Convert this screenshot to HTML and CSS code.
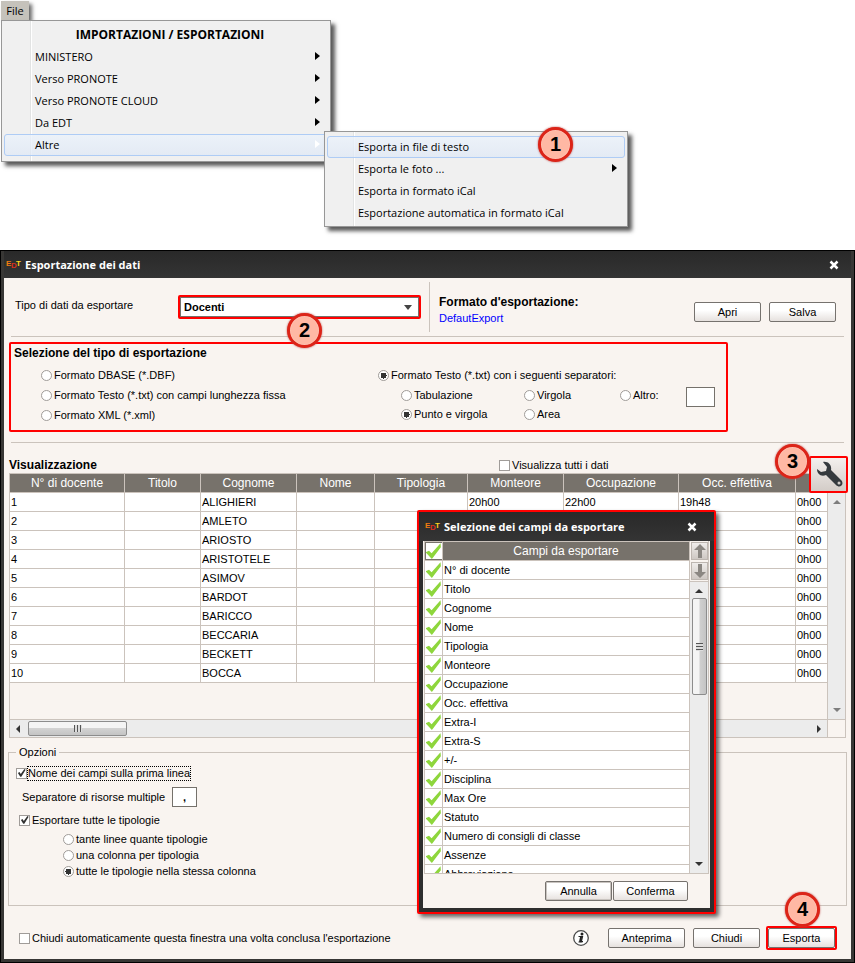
FILE: index.html
```html
<!DOCTYPE html>
<html lang="it">
<head>
  <meta charset="utf-8">
  <title>Esportazione dei dati</title>
  <link rel="stylesheet" href="styles.css">
</head>
<body>
  <nav class="menu-area">
    <button type="button" class="menu-tab">File</button>
    <div class="menu">
      <h2>IMPORTAZIONI / ESPORTAZIONI</h2>
      <button type="button" class="menu-item sub">MINISTERO</button>
      <button type="button" class="menu-item sub">Verso PRONOTE</button>
      <button type="button" class="menu-item sub">Verso PRONOTE CLOUD</button>
      <button type="button" class="menu-item sub">Da EDT</button>
      <button type="button" class="menu-item sub active">Altre</button>
    </div>
    <div class="menu submenu">
      <button type="button" class="menu-item active">Esporta in file di testo</button>
      <button type="button" class="menu-item sub">Esporta le foto ...</button>
      <button type="button" class="menu-item">Esporta in formato iCal</button>
      <button type="button" class="menu-item">Esportazione automatica in formato iCal</button>
      <span class="badge badge-1">1</span>
    </div>
  </nav>

  <main class="window">
    <header class="titlebar">
      <span class="logo"><b>E</b><b>D</b><b>T</b></span>
      <h1>Esportazione dei dati</h1>
      <button type="button" class="close" aria-label="Chiudi">
        <svg width="10" height="10" viewBox="0 0 10 10"><path d="M1.500 1.500l7 7M8.500 1.500l-7 7" stroke="#fff" stroke-width="2.500"/></svg>
      </button>
    </header>

    <div class="window-body">
      <section class="top-row">
        <label class="type-label" for="dataType">Tipo di dati da esportare</label>
        <div class="select-box">
          <select id="dataType"><option>Docenti</option></select>
          <span class="badge badge-2">2</span>
        </div>
        <div class="format">
          <strong>Formato d'esportazione:</strong>
          <a href="#">DefautExport</a>
        </div>
        <div class="top-buttons">
          <button type="button" class="btn">Apri</button>
          <button type="button" class="btn">Salva</button>
        </div>
      </section>

      <section class="export-type">
        <h2>Selezione del tipo di esportazione</h2>
        <div class="formats">
          <div class="format-list">
            <label><input type="radio" name="format">Formato DBASE (*.DBF)</label>
            <label><input type="radio" name="format">Formato Testo (*.txt) con campi lunghezza fissa</label>
            <label><input type="radio" name="format">Formato XML (*.xml)</label>
          </div>
          <div>
            <label><input type="radio" name="format" checked>Formato Testo (*.txt) con i seguenti separatori:</label>
            <div class="separators">
              <div>
                <label><input type="radio" name="sep">Tabulazione</label>
                <label><input type="radio" name="sep" checked>Punto e virgola</label>
              </div>
              <div>
                <label><input type="radio" name="sep">Virgola</label>
                <label><input type="radio" name="sep">Area</label>
              </div>
              <label><input type="radio" name="sep">Altro:</label>
              <input type="text" class="sep-input" aria-label="Altro separatore">
            </div>
          </div>
        </div>
      </section>

      <section class="preview">
        <div class="preview-head">
          <h2>Visualizzazione</h2>
          <label><input type="checkbox">Visualizza tutti i dati</label>
        </div>
        <div class="grid-box">
          <div class="grid-data">
            <table class="grid">
              <colgroup>
                <col class="c-num"><col class="c-title"><col class="c-surname"><col class="c-name"><col class="c-type">
                <col class="c-hours"><col class="c-occ"><col class="c-eff"><col class="c-extra">
              </colgroup>
              <thead>
                <tr><th>N° di docente</th><th>Titolo</th><th>Cognome</th><th>Nome</th><th>Tipologia</th><th>Monteore</th><th>Occupazione</th><th>Occ. effettiva</th><th></th></tr>
              </thead>
              <tbody>
                <tr><td>1</td><td></td><td>ALIGHIERI</td><td></td><td></td><td>20h00</td><td>22h00</td><td>19h48</td><td>0h00</td></tr>
                <tr><td>2</td><td></td><td>AMLETO</td><td></td><td></td><td></td><td></td><td></td><td>0h00</td></tr>
                <tr><td>3</td><td></td><td>ARIOSTO</td><td></td><td></td><td></td><td></td><td></td><td>0h00</td></tr>
                <tr><td>4</td><td></td><td>ARISTOTELE</td><td></td><td></td><td></td><td></td><td></td><td>0h00</td></tr>
                <tr><td>5</td><td></td><td>ASIMOV</td><td></td><td></td><td></td><td></td><td></td><td>0h00</td></tr>
                <tr><td>6</td><td></td><td>BARDOT</td><td></td><td></td><td></td><td></td><td></td><td>0h00</td></tr>
                <tr><td>7</td><td></td><td>BARICCO</td><td></td><td></td><td></td><td></td><td></td><td>0h00</td></tr>
                <tr><td>8</td><td></td><td>BECCARIA</td><td></td><td></td><td></td><td></td><td></td><td>0h00</td></tr>
                <tr><td>9</td><td></td><td>BECKETT</td><td></td><td></td><td></td><td></td><td></td><td>0h00</td></tr>
                <tr><td>10</td><td></td><td>BOCCA</td><td></td><td></td><td></td><td></td><td></td><td>0h00</td></tr>
              </tbody>
            </table>
          </div>
          <div class="vscroll main-vscroll"><i class="arrow up dim"></i><i class="arrow down dim"></i></div>
          <div class="hscroll"><i class="arrow left"></i><span class="hthumb"></span><i class="arrow right"></i></div>
          <div class="corner"></div>
        </div>
        <button type="button" class="tool-btn" aria-label="Scegli i campi">
          <svg width="30" height="30" viewBox="0 0 30 30">
            <path d="M9 2c5-1 9 3 8 8l10 10c4 4-1 9-5 5L12 15c-5 2-9-1-9-6l4 3 5-1 1-4z" fill="#353a3e"/>
            <circle cx="25" cy="23" r="1.500" fill="#cfcac6"/>
          </svg>
        </button>
        <span class="badge badge-3">3</span>
      </section>

      <fieldset class="options">
        <legend>Opzioni</legend>
        <label class="opt-first"><input type="checkbox" checked><span>Nome dei campi sulla prima linea</span></label>
        <div class="opt-sep">
          <label for="multiSep">Separatore di risorse multiple</label>
          <input type="text" id="multiSep" value=",">
        </div>
        <label class="opt-all"><input type="checkbox" checked>Esportare tutte le tipologie</label>
        <div class="opt-radios">
          <label><input type="radio" name="tip">tante linee quante tipologie</label>
          <label><input type="radio" name="tip">una colonna per tipologia</label>
          <label><input type="radio" name="tip" checked>tutte le tipologie nella stessa colonna</label>
        </div>
      </fieldset>

      <footer class="footer">
        <label><input type="checkbox">Chiudi automaticamente questa finestra una volta conclusa l'esportazione</label>
        <svg class="info" width="18" height="18" viewBox="0 0 18 18">
          <circle cx="9" cy="9" r="7.300" fill="#fff" stroke="#4a4a4a" stroke-width="1.300"/>
          <circle cx="10" cy="5" r="1.500" fill="#222"/>
          <path d="M6.500 7.500H10.500L9.300 12.500H11M6.500 13H10.500" fill="none" stroke="#222" stroke-width="1.200"/>
          <path d="M9.200 7.500L8 13" stroke="#222" stroke-width="2"/>
        </svg>
        <button type="button" class="btn wide">Anteprima</button>
        <button type="button" class="btn">Chiudi</button>
        <div class="export-box">
          <button type="submit" class="btn">Esporta</button>
          <span class="badge badge-4">4</span>
        </div>
      </footer>
    </div>

    <section class="dialog" role="dialog" aria-labelledby="dialogTitle">
      <header class="titlebar">
        <span class="logo"><b>E</b><b>D</b><b>T</b></span>
        <h1 id="dialogTitle">Selezione dei campi da esportare</h1>
        <button type="button" class="close" aria-label="Chiudi">
          <svg width="10" height="10" viewBox="0 0 10 10"><path d="M1.500 1.500l7 7M8.500 1.500l-7 7" stroke="#fff" stroke-width="2.500"/></svg>
        </button>
      </header>
      <div class="dialog-body">
        <div class="fields-box">
          <div class="fields-clip">
            <table class="fields">
              <thead>
                <tr><th class="all"><input type="checkbox" class="tick" checked aria-label="Tutti i campi"></th><th>Campi da esportare</th></tr>
              </thead>
              <tbody>
                <tr><td><input type="checkbox" class="tick" id="f1" checked></td><td><label for="f1">N° di docente</label></td></tr>
                <tr><td><input type="checkbox" class="tick" id="f2" checked></td><td><label for="f2">Titolo</label></td></tr>
                <tr><td><input type="checkbox" class="tick" id="f3" checked></td><td><label for="f3">Cognome</label></td></tr>
                <tr><td><input type="checkbox" class="tick" id="f4" checked></td><td><label for="f4">Nome</label></td></tr>
                <tr><td><input type="checkbox" class="tick" id="f5" checked></td><td><label for="f5">Tipologia</label></td></tr>
                <tr><td><input type="checkbox" class="tick" id="f6" checked></td><td><label for="f6">Monteore</label></td></tr>
                <tr><td><input type="checkbox" class="tick" id="f7" checked></td><td><label for="f7">Occupazione</label></td></tr>
                <tr><td><input type="checkbox" class="tick" id="f8" checked></td><td><label for="f8">Occ. effettiva</label></td></tr>
                <tr><td><input type="checkbox" class="tick" id="f9" checked></td><td><label for="f9">Extra-I</label></td></tr>
                <tr><td><input type="checkbox" class="tick" id="f10" checked></td><td><label for="f10">Extra-S</label></td></tr>
                <tr><td><input type="checkbox" class="tick" id="f11" checked></td><td><label for="f11">+/-</label></td></tr>
                <tr><td><input type="checkbox" class="tick" id="f12" checked></td><td><label for="f12">Disciplina</label></td></tr>
                <tr><td><input type="checkbox" class="tick" id="f13" checked></td><td><label for="f13">Max Ore</label></td></tr>
                <tr><td><input type="checkbox" class="tick" id="f14" checked></td><td><label for="f14">Statuto</label></td></tr>
                <tr><td><input type="checkbox" class="tick" id="f15" checked></td><td><label for="f15">Numero di consigli di classe</label></td></tr>
                <tr><td><input type="checkbox" class="tick" id="f16" checked></td><td><label for="f16">Assenze</label></td></tr>
                <tr><td><input type="checkbox" class="tick" id="f17" checked></td><td><label for="f17">Abbreviazione</label></td></tr>
              </tbody>
            </table>
          </div>
          <div class="fields-side">
            <button type="button" class="move" aria-label="Sposta su"><svg width="12" height="14" viewBox="0 0 12 14"><path d="M6 0l6 6H8v8H4V6H0z" fill="#8b8782"/></svg></button>
            <button type="button" class="move" aria-label="Sposta giù"><svg width="12" height="14" viewBox="0 0 12 14"><path d="M6 14L0 8h4V0h4v8h4z" fill="#8b8782"/></svg></button>
            <div class="vscroll"><i class="arrow up"></i><span class="vthumb"></span><i class="arrow down"></i></div>
          </div>
        </div>
        <div class="dialog-buttons">
          <button type="button" class="btn focus">Annulla</button>
          <button type="button" class="btn confirm">Conferma</button>
        </div>
      </div>
    </section>
  </main>
</body>
</html>
```

FILE: styles.css
```css
* {
  box-sizing: border-box;
}

body, h1, h2, fieldset, legend {
  margin: 0;
  padding: 0;
}

body {
  background: #fff;
  color: #000;
  font: 11px/16px "Liberation Sans", Arial, sans-serif;
}

button, input, select {
  margin: 0;
  padding: 0;
  font: inherit;
  color: inherit;
}

h2, strong {
  font-size: 12px;
}

/* Menu */
.menu-area {
  position: relative;
  height: 250px;
  padding: 1px;
  font-family: "Open Sans", "Noto Sans", sans-serif;
}

.menu-tab {
  display: block;
  width: 28px;
  height: 19px;
  border: 0;
  background: #c5c2bb;
  box-shadow: 3px 3px 4px rgba(0, 0, 0, 0.6);
}

.menu {
  position: relative;
  width: 330px;
  padding: 3px 2px 5px;
  border: 1px solid #979797;
  background: linear-gradient(90deg, transparent 28px, #e2e3e3 28px, #e2e3e3 29px, #fff 29px, #fff 30px, transparent 30px) #f0f0f0;
  box-shadow: 4px 4px 4px rgba(0, 0, 0, 0.65);
}

.menu h2 {
  padding-left: 8px;
  line-height: 22px;
  text-align: center;
}

.menu-item {
  position: relative;
  display: block;
  width: 100%;
  height: 22px;
  padding-left: 30px;
  border: 1px solid transparent;
  border-radius: 3px;
  background: none;
  text-align: left;
}

.menu-item.active {
  border-color: #aeccf5;
  background: linear-gradient(rgba(235, 242, 251, 0.8), rgba(222, 232, 246, 0.7));
}

.menu-item.sub::after {
  content: "";
  position: absolute;
  right: 7px;
  top: 5px;
  border: 4px solid transparent;
  border-left: 5px solid #000;
  border-right: 0;
}

.menu-item.sub.active::after {
  border-left-color: #fff;
}

.submenu {
  position: absolute;
  left: 324px;
  top: 131px;
  width: 304px;
  padding: 4px 2px 2px;
}

/* Step badges */
.badge {
  position: absolute;
  z-index: 2;
  width: 35px;
  height: 35px;
  border: 3px solid #dc2418;
  border-radius: 50%;
  background: #ffb8a4;
  box-shadow: inset 0 0 1px #fff, 0 0 2px #b44;
  font: bold 20px/28px "Liberation Sans", Arial, sans-serif;
  text-align: center;
}

.badge-1 { left: 213px; top: -5px; }
.badge-2 { left: 107px; top: 16px; }
.badge-3 { right: 41px; top: 2px; }
.badge-4 { left: 17px; top: -36px; }

/* Window */
.window {
  position: relative;
  padding: 0 3px 3px;
  border: 1px solid #000;
  background: #383735;
}

.titlebar {
  display: flex;
  align-items: center;
  height: 27px;
  padding: 0 12px 0 2px;
  background: linear-gradient(#292929, #343434);
  color: #fff;
}

.titlebar h1 {
  flex: 1;
  font: bold 11px/16px "Open Sans", "Noto Sans", sans-serif;
}

.logo {
  display: flex;
  width: 19px;
  font-size: 8px;
  line-height: 10px;
}

.logo b {
  width: 5px;
}

.logo b:nth-child(1) { color: #f07c10; }
.logo b:nth-child(2) { padding-top: 2px; color: #d8301c; }
.logo b:nth-child(3) { color: #ffd21c; }

.close {
  display: flex;
  border: 0;
  background: none;
}

.window-body {
  background: #f9f4f0;
}

label {
  display: flex;
  align-items: center;
}

/* Form controls */
input[type="radio"],
input[type="checkbox"] {
  appearance: none;
  flex: none;
  width: 11px;
  height: 11px;
  margin-right: 2px;
  border: 1px solid #a09c99;
  background: #fff;
}

input[type="radio"] {
  border-radius: 50%;
}

input[type="radio"]:checked {
  background: radial-gradient(#333 0 3px, #fff 3px);
}

input[type="checkbox"]:checked::before {
  content: "";
  display: block;
  width: 9px;
  height: 9px;
  background: #333;
  clip-path: polygon(10% 50%, 28% 40%, 42% 62%, 82% 6%, 96% 14%, 48% 92%, 36% 92%);
}

input[type="text"] {
  border: 1px solid #75716b;
  background: #fff;
}

.btn {
  width: 67px;
  height: 20px;
  border: 1px solid #76726e;
  border-radius: 2px;
  background: linear-gradient(#fff 40%, #e6e1de);
}

.btn.wide {
  width: 77px;
}

/* Top row */
.top-row {
  display: flex;
  align-items: center;
  height: 59px;
  margin: 0 7px;
  padding-right: 8px;
  border-bottom: 1px solid #cbc3bc;
}

.type-label {
  width: 167px;
  padding: 0 0 4px 4px;
}

.select-box {
  position: relative;
  width: 243px;
  border: 2px solid #f00;
  border-radius: 2px;
}

.select-box::after {
  content: "";
  position: absolute;
  right: 7px;
  top: 8px;
  border: 4px solid transparent;
  border-top: 5px solid #444;
  border-bottom: 0;
}

select {
  appearance: none;
  display: block;
  width: 100%;
  height: 20px;
  padding-left: 3px;
  border: 1px solid #75716b;
  border-radius: 0;
  background: #fff;
  font-weight: bold;
}

.format {
  flex: 1;
  display: flex;
  flex-direction: column;
  height: 50px;
  margin-left: 8px;
  padding: 12px 0 0 9px;
  border-left: 1px solid #cbc3bc;
}

.format a {
  color: #00f;
  text-decoration: none;
}

.top-buttons {
  display: flex;
  gap: 8px;
  padding-top: 10px;
}

/* Export type */
.export-type {
  margin: 5px 123px 10px 5px;
  padding: 0 3px 5px;
  border: 2px solid #f00;
  border-radius: 2px;
}

.export-type h2 {
  line-height: 18px;
}

.formats {
  display: flex;
  padding: 3px 0 0 27px;
}

.formats label {
  height: 20px;
}

.format-list {
  width: 337px;
}

.separators {
  display: flex;
  align-items: flex-start;
  padding-left: 23px;
}

.separators label + label {
  height: 18px;
}

.separators > * {
  width: 96px;
}

.separators > :first-child {
  width: 123px;
}

.separators > label {
  width: 66px;
}

.separators .sep-input {
  width: 29px;
  height: 20px;
  margin-top: 2px;
}

/* Preview */
.preview {
  position: relative;
}

.preview::before {
  content: "";
  display: block;
  height: 1px;
  margin: 0 7px;
  background: #cbc3bc;
}

.preview-head {
  display: flex;
  align-items: flex-end;
  height: 30px;
  padding-left: 5px;
}

.preview-head h2 {
  width: 490px;
}

.grid-box {
  display: grid;
  grid-template-columns: 1fr 18px;
  grid-template-rows: 246px 19px;
  margin: 0 5px;
}

.grid-data {
  border: 1px solid #cbc3bc;
  border-top: 0;
  border-bottom: 0;
}

.grid, .fields {
  width: 100%;
  border-collapse: collapse;
  table-layout: fixed;
}

.grid {
  margin-left: -1px;
  width: calc(100% + 2px);
}

.grid th, .grid td,
.fields th, .fields td {
  height: 19px;
  padding: 0 1px;
  border: 1px solid #cbc3bc;
  background: #fff;
  line-height: 16px;
  white-space: nowrap;
}

.grid th, .fields th {
  background: #77726b;
  color: #fff;
  font-size: 12px;
  font-weight: normal;
}

.c-num { width: 115px; }
.c-title { width: 76px; }
.c-surname { width: 96px; }
.c-name { width: 78px; }
.c-type { width: 93px; }
.c-hours { width: 96px; }
.c-occ { width: 115px; }
.c-eff { width: 117px; }

.vscroll {
  display: flex;
  flex-direction: column;
  align-items: center;
  justify-content: space-between;
  padding: 7px 0;
  background: #ececec;
}

.main-vscroll {
  padding-top: 27px;
  border-right: 1px solid #cbc3bc;
}

.hscroll {
  display: flex;
  align-items: center;
  padding: 0 6px;
  border: 1px solid #cbc3bc;
  background: #ececec;
}

.hthumb {
  display: flex;
  align-items: center;
  justify-content: center;
  width: 99px;
  height: 15px;
  margin: 0 auto 0 8px;
  border: 1px solid #8c8c8c;
  border-radius: 2px;
  background: linear-gradient(#f4f4f4 50%, #d2d2d2 50%, #c4c4c4);
}

.hthumb::before {
  content: "";
  width: 8px;
  height: 7px;
  background: repeating-linear-gradient(90deg, #555 0 1px, #ddd 1px 3px);
}

.arrow {
  border: 4px solid transparent;
}

.arrow.up { border-top: 0; border-bottom-color: #333; }
.arrow.down { border-bottom: 0; border-top-color: #333; }
.arrow.left { border-left: 0; border-right-color: #333; }
.arrow.right { border-right: 0; border-left-color: #333; }
.arrow.dim { opacity: 0.6; }

.corner {
  border: 1px solid #cbc3bc;
  border-left: 0;
}

.tool-btn {
  position: absolute;
  right: 3px;
  top: 14px;
  width: 39px;
  height: 37px;
  border: 2px solid #f00;
  border-radius: 2px;
  background: linear-gradient(#f3f0ee, #d3ccc7);
}

.tool-btn svg {
  display: block;
  margin: auto;
}

/* Options */
.options {
  margin: 7px 4px 0;
  padding: 6px 7px 26px;
  border: 1px solid #cbc3bc;
}

.options legend {
  padding: 0 3px;
  line-height: 14px;
}

.opt-first {
  height: 16px;
}

.opt-first input[type="checkbox"] {
  margin-right: 1px;
}

.opt-first span {
  line-height: 13px;
  outline: 1px dotted #000;
}

.opt-sep {
  display: flex;
  align-items: center;
  gap: 7px;
  margin: 6px 0 5px 6px;
}

.opt-sep input[type="text"] {
  width: 25px;
  height: 20px;
  font-weight: bold;
  text-align: center;
}

.opt-all {
  padding-left: 3px;
}

.opt-radios {
  padding: 3px 0 0 47px;
}

/* Footer */
.footer {
  display: flex;
  align-items: center;
  gap: 8px;
  height: 53px;
  padding: 11px 14px 0 15px;
}

.footer label {
  flex: 1;
}

.info {
  margin-right: 10px;
}

.export-box {
  position: relative;
  margin-left: -2px;
  border: 2px solid #f00;
  border-radius: 2px;
}

.export-box .btn {
  display: block;
}

/* Field dialog */
.dialog {
  position: absolute;
  right: 138px;
  top: 259px;
  width: 299px;
  padding: 0 4px 4px;
  border: 2px solid #f00;
  border-radius: 2px;
  background: #2e2e2e;
  box-shadow: 3px 3px 4px rgba(0, 0, 0, 0.6);
}

.dialog .titlebar {
  height: 29px;
  margin: 0 -4px;
  padding: 0 17px 0 6px;
}

.dialog-body {
  background: #f9f4f0;
}

.fields-box {
  display: flex;
  height: 333px;
  margin: 0 1px;
  border-bottom: 1px solid #cbc3bc;
}

.fields-clip {
  flex: 1;
  overflow: hidden;
}

.fields th:first-child {
  width: 18px;
}

.fields th:first-child,
.fields td:first-child {
  padding: 0;
}

.fields label {
  display: block;
}

.fields input.tick {
  display: block;
  width: 16px;
  height: 16px;
  margin: 0 auto;
  border: 0;
  background: none;
}

.fields th input.tick {
  background: #fff;
}

.fields .tick:checked::before {
  width: 16px;
  height: 16px;
  background: #8ed63c;
  clip-path: polygon(0 58%, 22% 48%, 38% 64%, 94% 2%, 96% 26%, 40% 100%);
}

.fields-side {
  display: flex;
  flex-direction: column;
  width: 19px;
  border-right: 1px solid #cbc3bc;
}

.move {
  display: flex;
  align-items: center;
  justify-content: center;
  height: 18px;
  margin: 1px 0 1px 1px;
  border: 1px solid #bdb6b0;
  background: linear-gradient(#efecea, #cec8c3);
}

.fields-side .vscroll {
  flex: 1;
  border-top: 1px solid #cbc3bc;
}

.vthumb {
  display: flex;
  align-items: center;
  justify-content: center;
  width: 15px;
  height: 97px;
  margin: 5px 0 auto;
  border: 1px solid #8c8c8c;
  border-radius: 2px;
  background: linear-gradient(90deg, #f4f4f4 45%, #cfcfcf 55%, #c4c4c4);
}

.vthumb::before {
  content: "";
  width: 7px;
  height: 8px;
  background: repeating-linear-gradient(#555 0 1px, #ddd 1px 3px);
}

.dialog-buttons {
  display: flex;
  justify-content: flex-end;
  gap: 1px;
  padding: 7px 22px 7px 0;
}

.btn.confirm {
  width: 75px;
}

.btn.focus {
  box-shadow: inset 0 0 0 1px #c9c4c0;
}
```
